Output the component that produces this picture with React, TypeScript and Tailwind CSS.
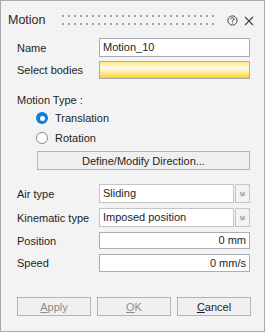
import React from 'react'

const font = { fontFamily: '"Liberation Sans", Arial, sans-serif' }

function TextBox({ value, right = false, h = 'h-[18px]' }: { value: string; right?: boolean; h?: string }) {
  return (
    <div className={`w-[151px] ${h} border border-[#abadb3] bg-white flex items-center px-[3px] ${right ? 'justify-end' : ''}`}>
      <span className="text-[#1e1e1e] leading-none">{value}</span>
    </div>
  )
}

function Select({ value }: { value: string }) {
  return (
    <div className="flex w-[151px] h-[19px]">
      <div className="flex-1 border border-[#c5c5c5] bg-white flex items-center px-[3px]">
        <span className="leading-none text-[#1e1e1e]">{value}</span>
      </div>
      <div className="w-[15px] ml-[1px] border border-[#c5c5c5] bg-[#f3f3f3] flex items-center justify-center">
        <svg width="7" height="6" viewBox="0 0 7 6">
          <path d="M1 1 L3.5 3 L6 1" stroke="#a8a8a8" strokeWidth="1.2" fill="none" />
          <path d="M1 3 L3.5 5 L6 3" stroke="#a8a8a8" strokeWidth="1.2" fill="none" />
        </svg>
      </div>
    </div>
  )
}

function Row({ label, children, className = '' }: { label: string; children: React.ReactNode; className?: string }) {
  return (
    <div className={`flex items-center ${className}`}>
      <div className="w-[82px] text-[#1e1e1e]">{label}</div>
      {children}
    </div>
  )
}

function Button({ children, disabled = false, w = 'w-[74px]' }: { children: React.ReactNode; disabled?: boolean; w?: string }) {
  return (
    <div
      className={`${w} h-[19px] border border-[#b4b4b4] bg-[#f0f0f0] flex items-center justify-center ${
        disabled ? 'text-[#8d8d8d]' : 'text-[#1e1e1e]'
      }`}
    >
      {children}
    </div>
  )
}

export default function App() {
  return (
    <div
      className="w-[265px] h-[332px] border border-[#a9a9a9] bg-[#f3f3f3] text-[11px] leading-[14px] flex flex-col"
      style={font}
    >
      {/* title bar */}
      <div className="h-[37px] flex items-start pt-[11px] pl-[7px] pr-[10px]">
        <span className="text-[12.5px] text-[#2b2626] leading-[16px]">Motion</span>
        <div className="ml-[16px] mt-[3px] flex-1 grid grid-cols-[repeat(26,6px)] gap-y-[5px] h-[10px]">
          {Array.from({ length: 52 }).map((_, i) => (
            <div key={i} className="w-[2px] h-[2px] bg-[#a3a3a3]" />
          ))}
        </div>
        <svg width="11" height="11" viewBox="0 0 11 11" className="mt-[3px] mr-[6px]">
          <circle cx="5.5" cy="5.5" r="4.6" stroke="#444" strokeWidth="1" fill="none" />
          <path d="M3.8 4.3 Q3.8 2.9 5.5 2.9 Q7.2 2.9 7.2 4.2 Q7.2 5.1 5.5 5.6 L5.5 6.6" stroke="#444" strokeWidth="1" fill="none" />
          <circle cx="5.5" cy="8" r="0.6" fill="#444" />
        </svg>
        <svg width="10" height="10" viewBox="0 0 10 10" className="mt-[3.5px]">
          <path d="M1 1 L9 9 M9 1 L1 9" stroke="#444" strokeWidth="1.1" />
        </svg>
      </div>

      <div className="pl-[16px] flex flex-col">
        <Row label="Name">
          <TextBox value="Motion_10" h="h-[19px]" />
        </Row>
        <Row label="Select bodies" className="mt-[4px]">
          <div className="w-[151px] h-[18px] border border-[#abadb3] bg-[linear-gradient(to_bottom,#fde98a,#fffbea_40%,#fde67c_75%,#f6d11e)]" />
        </Row>

        <div className="mt-[14px] h-[14px] text-[#1e1e1e]">Motion Type :</div>

        <div className="mt-[4px] ml-[19px] flex items-center h-[14px]">
          <div className="w-[12px] h-[12px] rounded-full bg-[#0f7dd6] flex items-center justify-center">
            <div className="w-[5px] h-[5px] rounded-full bg-white" />
          </div>
          <span className="ml-[7px] text-[#1e1e1e]">Translation</span>
        </div>
        <div className="mt-[6px] ml-[19px] flex items-center h-[14px]">
          <div className="w-[12px] h-[12px] rounded-full border border-[#8a8a8a] bg-white" />
          <span className="ml-[7px] text-[#1e1e1e]">Rotation</span>
        </div>

        <div className="mt-[6px] ml-[20px]">
          <Button w="w-[213px]">Define/Modify Direction...</Button>
        </div>

        <Row label="Air type" className="mt-[14px]">
          <Select value="Sliding" />
        </Row>
        <Row label="Kinematic type" className="mt-[5px]">
          <Select value="Imposed position" />
        </Row>
        <Row label="Position" className="mt-[5px]">
          <TextBox value="0 mm" right h="h-[17px]" />
        </Row>
        <Row label="Speed" className="mt-[5px]">
          <TextBox value="0 mm/s" right h="h-[18px]" />
        </Row>

        <div className="mt-[25px] flex gap-[6px]">
          <Button disabled>
            <span><span className="underline">A</span>pply</span>
          </Button>
          <Button disabled>
            <span><span className="underline">O</span>K</span>
          </Button>
          <Button>
            <span><span className="underline">C</span>ancel</span>
          </Button>
        </div>
      </div>
    </div>
  )
}
